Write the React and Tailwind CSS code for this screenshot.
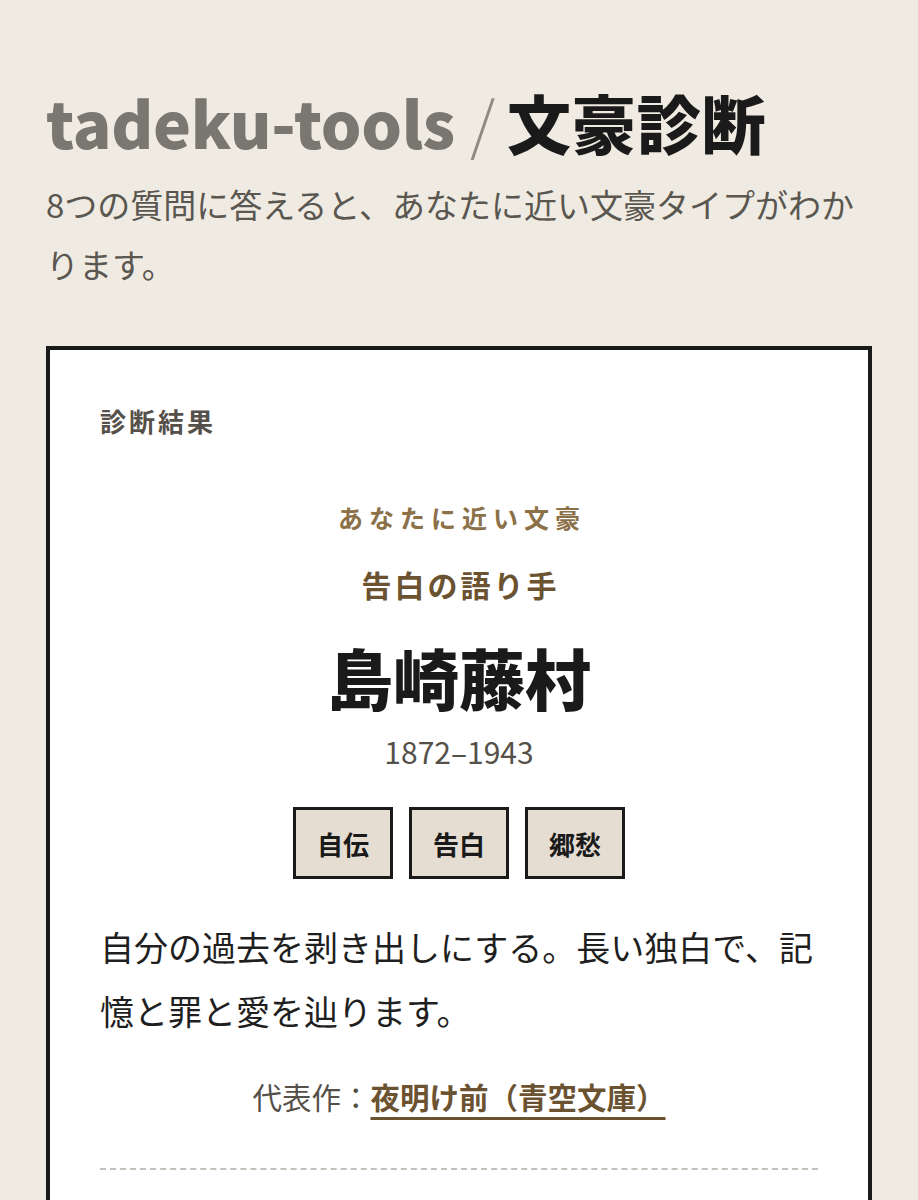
export default function App() {
  const font = { fontFamily: '"Noto Sans CJK JP", "Noto Sans", sans-serif' };
  return (
    <div className="min-h-[1200px] bg-[#efebe2] px-[46px] pt-[82px]" style={font}>
      <h1 className="text-[64px] leading-[79px] font-black tracking-[-0.3px] whitespace-nowrap">
        <span className="text-[#7a7670]">tadeku-tools</span>
        <span className="text-[#8e8a84] font-light pl-[15px] pr-[12px]">/</span>
        <span className="text-[#1a1a1a] tracking-[1px]">文豪診断</span>
      </h1>
      <p className="mt-[13px] text-[33px] leading-[60px] text-[#5a5650] pr-[4px]">
        8つの質問に答えると、あなたに近い文豪タイプがわかります。
      </p>
      <div className="mt-[52px] border-4 border-[#1a1a1a] bg-white px-[50px] pt-[52px] pb-[40px]">
        <div className="text-[26px] leading-[37px] font-bold tracking-[3px] text-[#555049]">診断結果</div>
        <div className="mt-[60px] flex flex-col items-center text-center">
          <div className="text-[25px] leading-[36px] font-bold tracking-[6px] text-[#8b7048] pl-[6px]">あなたに近い文豪</div>
          <div className="mt-[27px] text-[30px] leading-[45px] font-bold tracking-[3px] text-[#6b5230] pl-[3px]">告白の語り手</div>
          <div className="mt-[27px] text-[66px] leading-[85px] font-black text-[#1a1a1a]">島崎藤村</div>
          <div className="mt-[10px] text-[30px] leading-[44px] text-[#555049]">1872–1943</div>
          <div className="mt-[34px] flex gap-[16px]">
            {["自伝", "告白", "郷愁"].map((t) => (
              <div
                key={t}
                className="w-[100px] h-[72px] border-[3px] border-[#1a1a1a] bg-[#e5ddd2] flex items-center justify-center text-[26px] font-bold text-[#1a1a1a]"
              >
                {t}
              </div>
            ))}
          </div>
        </div>
        <p className="mt-[36px] text-[34px] leading-[64px] text-[#1f1f1f]">
          自分の過去を剥き出しにする。長い独白で、記憶と罪と愛を辿ります。
        </p>
        <div className="mt-[31px] text-center text-[29.5px] leading-[44px] text-[#555049]">
          代表作：
          <a
            href="#"
            className="font-bold text-[#6b5230] underline decoration-[3px] underline-offset-[8px] decoration-[#6b5230]"
          >
            夜明け前（青空文庫）
          </a>
        </div>
        <div className="mt-[50px] border-t-2 border-dashed border-[#c4c0ba]"></div>
        <div className="h-[200px]"></div>
      </div>
    </div>
  );
}
